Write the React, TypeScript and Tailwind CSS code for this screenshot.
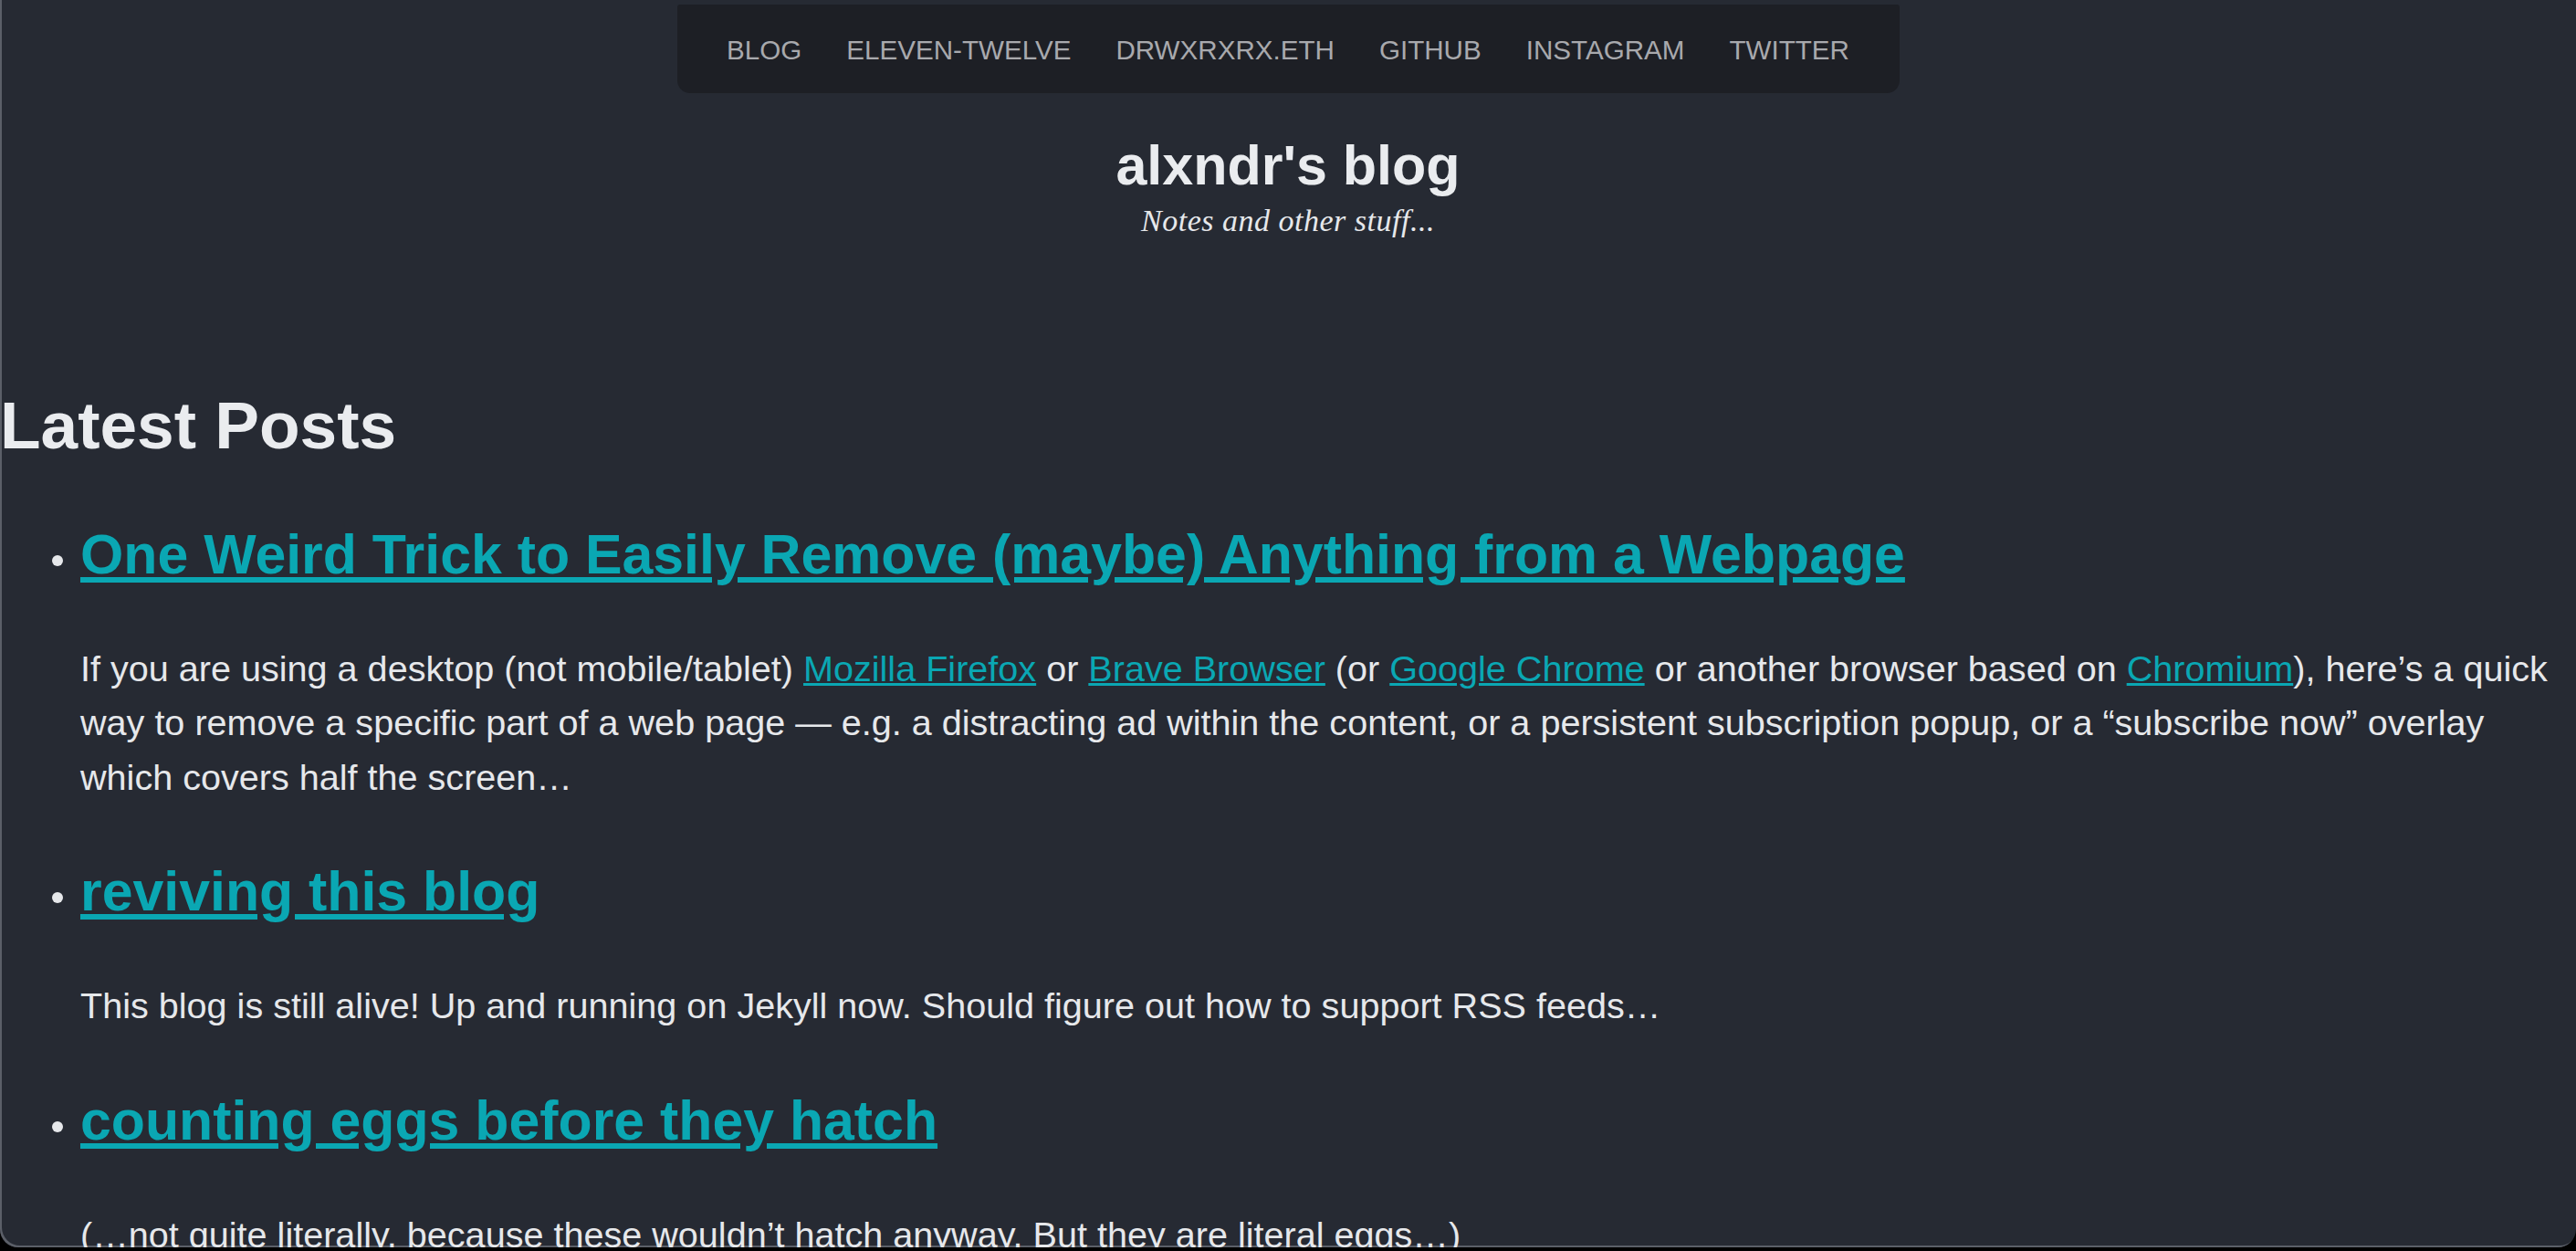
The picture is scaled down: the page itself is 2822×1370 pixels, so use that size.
import React from "react";

const navItems = ["Blog", "Eleven-Twelve", "drwxrxrx.eth", "GitHub", "Instagram", "Twitter"];

function Link({ children }: { children: React.ReactNode }) {
  return <a href="#" className="text-[#0aa7b3] underline">{children}</a>;
}

function Post({ title, children }: { title: string; children: React.ReactNode }) {
  return (
    <li className="flex">
      <div className="w-[88px] shrink-0 pl-[57px] pt-[35px]">
        <span className="block h-[12px] w-[12px] rounded-full bg-[#e6e8eb]" />
      </div>
      <div className="min-w-0 flex-1">
        <h3 className="text-[60.8px] font-bold leading-[69px]">
          <a href="#" className="text-[#0aa7b3] underline">{title}</a>
        </h3>
        <p className="mt-[61px] text-[39.6px] leading-[59.4px] text-[#e6e8eb]">{children}</p>
      </div>
    </li>
  );
}

export default function App() {
  return (
    <div className="h-[1370px] w-full overflow-hidden bg-black font-['Liberation_Sans',Arial,sans-serif]">
      <div className="h-[1366px] overflow-hidden rounded-b-[20px] bg-[#262a33] shadow-[inset_2px_-2px_0_#5b5f68]">
        <nav className="mx-auto mt-[5px] flex h-[97px] w-[1339px] items-center justify-center gap-[49px] rounded-t-[3px] rounded-b-[14px] bg-[#1d1f25] pt-[3px] text-[29.6px] uppercase text-[#a8a9ad]">
          {navItems.map((n) => (
            <a key={n} href="#">{n}</a>
          ))}
        </nav>
        <header className="mt-[45px] flex flex-col items-center">
          <h1 className="text-[61px] font-bold leading-[69px] text-[#eaecef]">alxndr's blog</h1>
          <p className="mt-[7px] font-['Liberation_Serif','Times_New_Roman',serif] text-[34px] italic leading-[37px] tracking-[0.5px] text-[#e6e8eb]">
            Notes and other stuff...
          </p>
        </header>
        <main className="pr-[11px]">
          <h2 className="mt-[163px] text-[73px] font-bold leading-[86px] text-[#eaecef]">Latest Posts</h2>
          <ul className="mt-[64px] flex flex-col gap-[61px]">
            <Post title="One Weird Trick to Easily Remove (maybe) Anything from a Webpage">
              If you are using a desktop (not mobile/tablet) <Link>Mozilla Firefox</Link> or{" "}
              <Link>Brave Browser</Link> (or <Link>Google Chrome</Link> or another browser based on{" "}
              <Link>Chromium</Link>), here’s a quick way to remove a specific part of a web page — e.g. a
              distracting ad within the content, or a persistent subscription popup, or a “subscribe now”
              overlay which covers half the screen…
            </Post>
            <Post title="reviving this blog">
              This blog is still alive! Up and running on Jekyll now. Should figure out how to support RSS feeds…
            </Post>
            <Post title="counting eggs before they hatch">
              (…not quite literally, because these wouldn’t hatch anyway. But they are literal eggs…)
            </Post>
          </ul>
        </main>
      </div>
    </div>
  );
}
